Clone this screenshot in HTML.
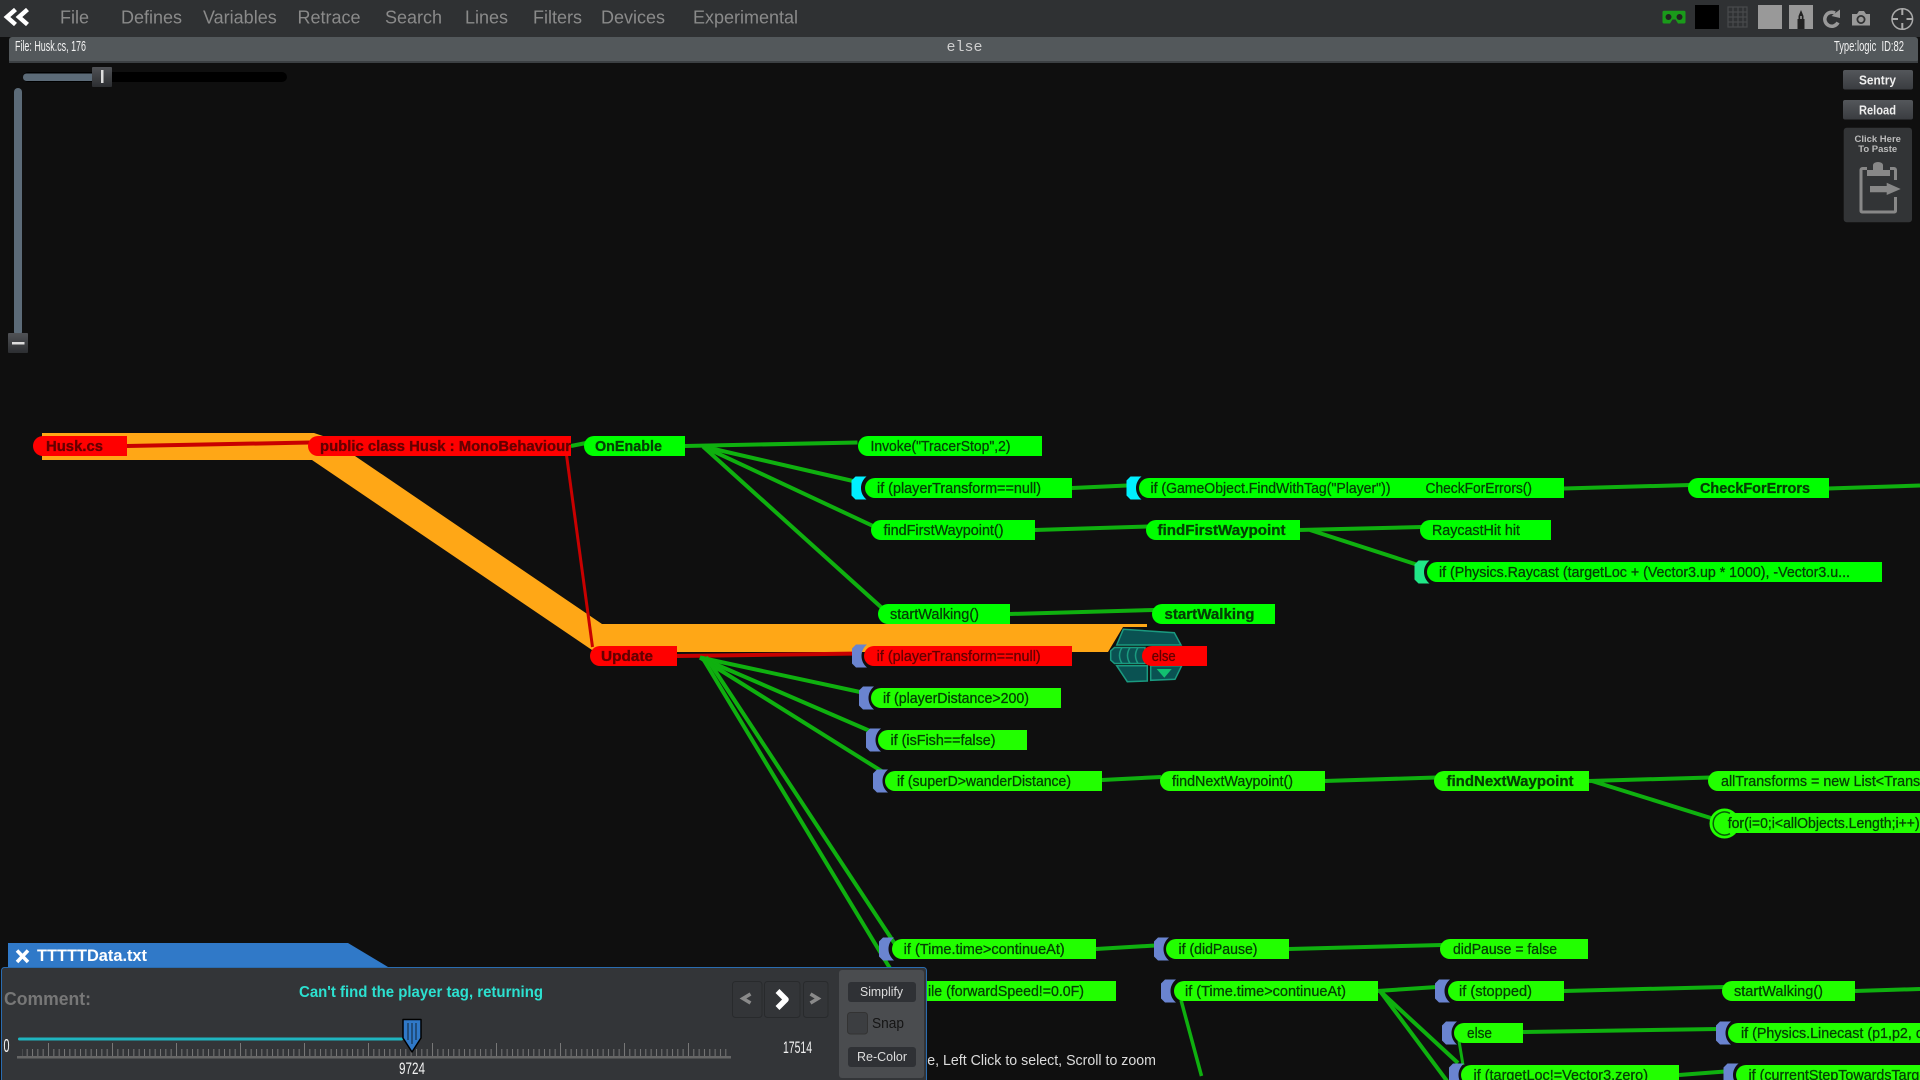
<!DOCTYPE html>
<html lang="en"><head><meta charset="utf-8"><title>Husk.cs</title>
<style>
html,body{margin:0;padding:0;background:#0f0f0f;width:1920px;height:1080px;overflow:hidden}
svg{display:block;font-family:"Liberation Sans",sans-serif}
.g text{fill:#043f04;stroke:#043f04;stroke-width:.3px;font-size:14.3px}
.r text{fill:#640000;stroke:#640000;stroke-width:.3px;font-size:14.3px}
.m text{fill:#8a8a8a;font-size:18px}
.c{fill:#f2f2f2;font-size:15px}
</style></head><body>
<svg width="1920" height="1080" viewBox="0 0 1920 1080" xmlns="http://www.w3.org/2000/svg">
<defs>
<path id="br" d="M4 0H15C11.500 3 9.500 7 9.500 11.500C9.500 16 11.500 20 15 23H4L0 19V4Z"/>
<linearGradient id="bt" x1="0" y1="0" x2="0" y2="1"><stop offset="0" stop-color="#54575b"/><stop offset="1" stop-color="#3a3c40"/></linearGradient>
<linearGradient id="kn" x1="0" y1="0" x2="0" y2="1"><stop offset="0" stop-color="#505256"/><stop offset="1" stop-color="#2c2e31"/></linearGradient>
<pattern id="tm" patternUnits="userSpaceOnUse" x="48" y="1049" width="5.333" height="7"><rect width="1" height="7" fill="#777"/></pattern>
</defs>
<rect width="1920" height="1080" fill="#0f0f0f"/>

<!-- orange path -->
<polygon fill="#ffa716" points="42,433 314,433 326,437 355,456 602,624 1147,624 1147,627 1123,627 1108,652 600,652 592,650 312,460 42,460"/>

<!-- red links -->
<g stroke="#c80000" fill="none">
<path stroke-width="4" d="M127 446L310 442.500"/>
<path stroke-width="3" d="M566.500 455L592.500 647"/>
<path stroke-width="4" d="M677 656L860 653.500"/>
</g>

<!-- green links -->
<g stroke="#0fb00f" stroke-width="4" fill="none">
<path d="M571 446L586 443"/>
<path d="M685 446L857.500 442.500"/>
<path d="M703 446.500L853 481"/>
<path d="M703 446.500L873 526"/>
<path d="M703 446.500L882 608"/>
<path d="M1072 488L1127 485.500"/>
<path d="M1035 530L1148 526.500"/>
<path d="M1010 614L1154 610"/>
<path d="M1564 488.500L1690 485"/>
<path d="M1828 488.500L1920 485.500"/>
<path d="M1299 530L1422 527"/>
<path d="M1310 530L1418 565"/>
<path d="M700 657.500L860 692"/>
<path d="M700 657.500L870 731"/>
<path d="M700 657.500L883 772"/>
<path d="M702 657L900 985"/>
<path d="M706 657L895 944"/>
<path d="M1096 949L1155 945.500"/>
<path d="M1289 949L1442 945"/>
<path d="M1377 991L1437 987"/>
<path d="M1564 991L1724 987"/>
<path d="M1855 991L1920 989"/>
<path d="M1523 1032L1718 1029"/>
<path d="M1380 991L1458 1063"/>
<path d="M1380 991L1447 1081"/>
<path d="M1459 1041L1463 1065" stroke-width="3"/>
<path d="M1679 1075L1725 1071.500"/>
<path d="M1181 1000L1201.500 1076" stroke-width="3.500"/>
<path d="M1102 780L1161 777"/>
<path d="M1324 781L1436 777.500"/>
<path d="M1589 781L1710 777.500"/>
<path d="M1592 781L1714 819"/>
</g>

<!-- teal widget -->
<g fill="#0a5252" stroke="#1a9a80" stroke-width="1.500">
<polygon points="1116.700,645 1123.300,629.300 1174.300,632.700 1181,645"/>
<polygon points="1114.500,647.500 1145,647.500 1145,663.500 1114.500,663.500 1110.700,660 1110.700,651"/>
<path fill="none" d="M1122 647.500Q1117 655.500 1122 663.500M1130 647.500Q1125 655.500 1130 663.500M1138 647.500Q1133 655.500 1138 663.500"/>
<polygon points="1116.700,665.700 1147.300,665.700 1147.300,681 1127.300,681.700"/>
<polygon points="1150.700,665.700 1181.700,665.700 1175,679.300 1150.700,680.300"/>
</g>
<polygon fill="#12c070" points="1156.700,669 1171.700,669 1164.300,677.700"/>

<!-- brackets -->
<g fill="#00f0ff"><use href="#br" x="851.500" y="476.500"/><use href="#br" x="1126.500" y="476.500"/></g>
<use href="#br" x="1414.500" y="560.500" fill="#20e888"/>
<g fill="#6a84d0">
<use href="#br" x="852" y="644.500"/><use href="#br" x="859" y="686.500"/><use href="#br" x="866" y="728.500"/><use href="#br" x="873" y="769.500"/>
<use href="#br" x="879" y="937.500"/><use href="#br" x="1154" y="937.500"/><use href="#br" x="1161" y="979.500"/><use href="#br" x="1435" y="979.500"/>
<use href="#br" x="1442" y="1021.500"/><use href="#br" x="1716" y="1021.500"/><use href="#br" x="1449" y="1063.500"/><use href="#br" x="1723.500" y="1063.500"/>
</g>

<!-- green nodes -->
<g fill="#00ff00">
<path d="M685 436H594a10 10 0 0 0 0 20H685z"/>
<path d="M1042 436H868a10 10 0 0 0 0 20H1042z"/>
<path d="M1072 478H875a10 10 0 0 0 0 20H1072z"/>
<path d="M1564 478H1149a10 10 0 0 0 0 20H1564z"/>
<path d="M1829 478H1698a10 10 0 0 0 0 20H1829z"/>
<path d="M1035 520H881a10 10 0 0 0 0 20H1035z"/>
<path d="M1300 520H1156a10 10 0 0 0 0 20H1300z"/>
<path d="M1551 520H1430a10 10 0 0 0 0 20H1551z"/>
<path d="M1882 562H1437a10 10 0 0 0 0 20H1882z"/>
<path d="M1010 604H888a10 10 0 0 0 0 20H1010z"/>
<path d="M1275 604H1162a10 10 0 0 0 0 20H1275z"/>
</g>
<g fill="#22ff00">
<path d="M1061 688H881a10 10 0 0 0 0 20H1061z"/>
<path d="M1027 730H888a10 10 0 0 0 0 20H1027z"/>
<path d="M1102 771H895a10 10 0 0 0 0 20H1102z"/>
<path d="M1325 771H1170a10 10 0 0 0 0 20H1325z"/>
<path d="M1589 771H1444a10 10 0 0 0 0 20H1589z"/>
<path d="M1920 771H1718a10 10 0 0 0 0 20H1920z"/>
<path d="M1920 813H1730a10 10 0 0 0 0 20H1920z"/>
<circle cx="1724.500" cy="823.500" r="15"/>
<path d="M1096 939H902a10 10 0 0 0 0 20H1096z"/>
<path d="M1116 981H880V1001H1116z"/>
<path d="M1289 939H1176a10 10 0 0 0 0 20H1289z"/>
<path d="M1588 939H1450a10 10 0 0 0 0 20H1588z"/>
<path d="M1378 981H1184a10 10 0 0 0 0 20H1378z"/>
<path d="M1564 981H1458a10 10 0 0 0 0 20H1564z"/>
<path d="M1855 981H1732a10 10 0 0 0 0 20H1855z"/>
<path d="M1523 1023H1464a10 10 0 0 0 0 20H1523z"/>
<path d="M1920 1023H1738a10 10 0 0 0 0 20H1920z"/>
<path d="M1679 1065H1471a10 10 0 0 0 0 20H1679z"/>
<path d="M1920 1065H1746a10 10 0 0 0 0 20H1920z"/>
</g>
<path d="M1730 813.300A11.500 11.500 0 1 0 1730 833.700" fill="none" stroke="#075c07" stroke-width="1.500"/>

<!-- red nodes -->
<g fill="#ff0000">
<path d="M127 436H43a10 10 0 0 0 0 20H127z"/>
<path d="M571 436H318a10 10 0 0 0 0 20H571z"/>
<path d="M677 646H600a10 10 0 0 0 0 20H677z"/>
<path d="M1072 646H874a10 10 0 0 0 0 20H1072z"/>
<path d="M1207 646H1152a10 10 0 0 0 0 20H1207z"/>
</g>

<!-- node text -->
<g class="g">
<text x="595" y="451" textLength="67" lengthAdjust="spacingAndGlyphs" style="font-weight:bold">OnEnable</text>
<text x="870.500" y="451" textLength="140" lengthAdjust="spacingAndGlyphs">Invoke("TracerStop",2)</text>
<text x="877" y="493" textLength="164" lengthAdjust="spacingAndGlyphs">if (playerTransform==null)</text>
<text x="1150.500" y="493" textLength="240" lengthAdjust="spacingAndGlyphs">if (GameObject.FindWithTag("Player"))</text>
<text x="1425.500" y="493" textLength="106.500" lengthAdjust="spacingAndGlyphs">CheckForErrors()</text>
<text x="1700" y="493" textLength="110" lengthAdjust="spacingAndGlyphs" style="font-weight:bold">CheckForErrors</text>
<text x="883.500" y="535" textLength="120" lengthAdjust="spacingAndGlyphs">findFirstWaypoint()</text>
<text x="1157.500" y="535" textLength="128" lengthAdjust="spacingAndGlyphs" style="font-weight:bold">findFirstWaypoint</text>
<text x="1432" y="535" textLength="88" lengthAdjust="spacingAndGlyphs">RaycastHit hit</text>
<text x="1439" y="577" textLength="411" lengthAdjust="spacingAndGlyphs">if (Physics.Raycast (targetLoc + (Vector3.up * 1000), -Vector3.u...</text>
<text x="890" y="619" textLength="89" lengthAdjust="spacingAndGlyphs">startWalking()</text>
<text x="1164.500" y="619" textLength="90" lengthAdjust="spacingAndGlyphs" style="font-weight:bold">startWalking</text>
<text x="883" y="703" textLength="146" lengthAdjust="spacingAndGlyphs">if (playerDistance&gt;200)</text>
<text x="890.500" y="745" textLength="105" lengthAdjust="spacingAndGlyphs">if (isFish==false)</text>
<text x="897" y="786" textLength="174" lengthAdjust="spacingAndGlyphs">if (superD&gt;wanderDistance)</text>
<text x="1172" y="786" textLength="121" lengthAdjust="spacingAndGlyphs">findNextWaypoint()</text>
<text x="1446.500" y="786" textLength="127" lengthAdjust="spacingAndGlyphs" style="font-weight:bold">findNextWaypoint</text>
<text x="1721" y="786">allTransforms = new List&lt;Transform&gt;()</text>
<text x="1727.700" y="828" textLength="192" lengthAdjust="spacingAndGlyphs">for(i=0;i&lt;allObjects.Length;i++)</text>
<text x="903.700" y="954" textLength="161" lengthAdjust="spacingAndGlyphs">if (Time.time&gt;continueAt)</text>
<text x="928" y="996" textLength="156" lengthAdjust="spacingAndGlyphs">ile (forwardSpeed!=0.0F)</text>
<text x="1178.500" y="954" textLength="79" lengthAdjust="spacingAndGlyphs">if (didPause)</text>
<text x="1453" y="954" textLength="104" lengthAdjust="spacingAndGlyphs">didPause = false</text>
<text x="1185" y="996" textLength="161" lengthAdjust="spacingAndGlyphs">if (Time.time&gt;continueAt)</text>
<text x="1459" y="996" textLength="73" lengthAdjust="spacingAndGlyphs">if (stopped)</text>
<text x="1734" y="996" textLength="89" lengthAdjust="spacingAndGlyphs">startWalking()</text>
<text x="1467" y="1038" textLength="25" lengthAdjust="spacingAndGlyphs">else</text>
<text x="1741" y="1038">if (Physics.Linecast (p1,p2, collisionMask))</text>
<text x="1473.500" y="1080" textLength="174.500" lengthAdjust="spacingAndGlyphs">if (targetLoc!=Vector3.zero)</text>
<text x="1748.500" y="1080">if (currentStepTowardsTarget)</text>
</g>
<g class="r">
<text x="46" y="451" textLength="57" lengthAdjust="spacingAndGlyphs" style="font-weight:bold">Husk.cs</text>
<text x="320" y="451" textLength="251" lengthAdjust="spacingAndGlyphs" style="font-weight:bold">public class Husk : MonoBehaviour</text>
<text x="601" y="661" textLength="52" lengthAdjust="spacingAndGlyphs" style="font-weight:bold">Update</text>
<text x="876.700" y="661" textLength="164" lengthAdjust="spacingAndGlyphs">if (playerTransform==null)</text>
<text x="1151.700" y="661" textLength="24" lengthAdjust="spacingAndGlyphs">else</text>
</g>
<text x="922.500" y="1065" fill="#dcdcdc" font-size="14.300" textLength="233.500" lengthAdjust="spacingAndGlyphs">re, Left Click to select, Scroll to zoom</text>

<!-- top bar -->
<rect x="9" y="37" width="1909" height="26" rx="3" fill="#53585b"/>
<rect x="9" y="61" width="1909" height="2" fill="#3c4043"/>
<rect width="1920" height="37" fill="#2f3133"/>
<path d="M15.500 9.500L7 17l8.500 7.500M27.500 9.500L19 17l8.500 7.500" fill="none" stroke="#fff" stroke-width="4.500"/>
<g class="m">
<text x="60" y="23.500">File</text><text x="121" y="23.500">Defines</text><text x="203" y="23.500">Variables</text><text x="297.500" y="23.500">Retrace</text><text x="385" y="23.500">Search</text><text x="465" y="23.500">Lines</text><text x="533" y="23.500">Filters</text><text x="601" y="23.500">Devices</text><text x="693" y="23.500">Experimental</text>
</g>
<text class="c" x="15" y="51" textLength="71" lengthAdjust="spacingAndGlyphs">File: Husk.cs, 176</text>
<text x="946.500" y="51" textLength="36" font-size="15" fill="#cfcfcf" style="font-family:'Liberation Mono',monospace">else</text>
<text class="c" x="1834" y="51" textLength="70" lengthAdjust="spacingAndGlyphs">Type:logic&#160;&#160;ID:82</text>

<!-- top right icons -->
<path fill="#1a9a1a" d="M1664 10.700H1684a1.500 1.500 0 0 1 1.500 1.500V22a1.500 1.500 0 0 1-1.500 1.500H1678L1675.500 19.500H1672.500L1670 23.500H1664a1.500 1.500 0 0 1-1.500-1.500V12.200a1.500 1.500 0 0 1 1.500-1.500z"/>
<circle cx="1668.500" cy="17" r="3" fill="#222"/><circle cx="1679.500" cy="17" r="3" fill="#222"/>
<rect x="1695" y="5" width="24" height="24" fill="#000"/>
<path fill="none" stroke="#484a4c" stroke-width="1.200" d="M1728 7H1747V27H1728ZM1728 12H1747M1728 17H1747M1728 22H1747M1733 7V27M1738 7V27M1743 7V27"/>
<rect x="1758" y="5" width="24" height="24" fill="#999"/>
<rect x="1789" y="5" width="24" height="24" fill="#999"/>
<path fill="#222" d="M1801 10L1803.500 16V19H1804.500V29H1797.500V19H1798.500V16Z"/>
<path fill="#999" d="M1800.200 16h1.600v3h-1.600z"/>
<path fill="none" stroke="#999" stroke-width="3.500" d="M1838 22.500A7 7 0 1 1 1835 13"/>
<polygon fill="#999" points="1840,9.500 1840,18 1831.500,16"/>
<path fill="#999" d="M1853 14H1857L1859 11H1864L1866 14H1870V25.500H1852V14z"/>
<circle cx="1861" cy="19.500" r="4" fill="#333" stroke="#2f3133"/><circle cx="1861" cy="19.500" r="2.700" fill="#999"/>
<circle cx="1902.300" cy="19" r="10.300" fill="none" stroke="#aaa" stroke-width="1.500"/>
<path stroke="#aaa" stroke-width="2" d="M1902.300 9V15M1902.300 23V29M1892 19H1898M1906.500 19H1912.500"/>

<!-- zoom sliders -->
<rect x="23" y="72" width="264" height="10" rx="5" fill="#000"/>
<rect x="23" y="73.500" width="72" height="7.500" rx="3.500" fill="#5c6b78"/>
<rect x="92" y="67" width="20" height="20" rx="1" fill="url(#kn)"/>
<rect x="101" y="70" width="2.500" height="13" fill="#ddd"/>
<rect x="14" y="88" width="8" height="248" rx="4" fill="#5c6b78"/>
<rect x="8" y="333" width="20" height="20" rx="1" fill="url(#kn)"/>
<rect x="12" y="342" width="12.500" height="2.500" fill="#ddd"/>

<!-- right buttons -->
<rect x="1843" y="70" width="70" height="19.500" rx="2" fill="url(#bt)"/>
<text x="1859" y="84.500" fill="#eee" font-size="12.500" font-weight="bold" textLength="37" lengthAdjust="spacingAndGlyphs">Sentry</text>
<rect x="1843" y="100" width="70" height="19.500" rx="2" fill="url(#bt)"/>
<text x="1859" y="114.500" fill="#eee" font-size="12.500" font-weight="bold" textLength="37" lengthAdjust="spacingAndGlyphs">Reload</text>
<rect x="1843.700" y="127.700" width="68.300" height="94.500" rx="3" fill="#323436"/>
<text x="1877.700" y="142" text-anchor="middle" fill="#bbb" font-size="9.500" font-weight="bold">Click Here</text>
<text x="1877.700" y="152" text-anchor="middle" fill="#bbb" font-size="9.500" font-weight="bold">To Paste</text>
<path fill="none" stroke="#888" stroke-width="3" d="M1867 168.500H1862.500a1.500 1.500 0 0 0-1.500 1.500V211a1 1 0 0 0 1 1H1894.500a1 1 0 0 0 1-1V197M1895.500 180V170a1.500 1.500 0 0 0-1.500-1.500H1890"/>
<path fill="#888" d="M1867 170H1873V165a5 3 0 0 1 10 0V170H1890V176H1867Z"/>
<path fill="#888" d="M1870 186H1886.700V182.700L1900.700 189L1886.700 195V192.300H1870Z"/>

<!-- bottom panel -->
<polygon fill="#3079c8" points="8,943 348,943 388,967 8,967"/>
<rect x="1.500" y="967.500" width="925" height="120" rx="3" fill="#333538" stroke="#2a6cb0"/>
<path stroke="#fff" stroke-width="3.500" d="M17 950.500L28 962M28 950.500L17 962"/>
<text x="37" y="961" fill="#fff" font-size="16.500" font-weight="bold" textLength="110" lengthAdjust="spacingAndGlyphs">TTTTTData.txt</text>
<text x="4" y="1005" fill="#777" font-size="18" font-weight="bold" textLength="87" lengthAdjust="spacingAndGlyphs">Comment:</text>
<text x="299" y="997" fill="#2ce0d0" font-size="16" font-weight="bold" textLength="244" lengthAdjust="spacingAndGlyphs">Can't find the player tag, returning</text>
<rect x="18" y="1037.500" width="385" height="3" rx="1.500" fill="#1fb5c0"/>
<rect x="22" y="1049" width="705" height="7" fill="url(#tm)"/>
<g fill="#777"><rect x="48" y="1043" width="1" height="13"/><rect x="112" y="1043" width="1" height="13"/><rect x="176" y="1043" width="1" height="13"/><rect x="240" y="1043" width="1" height="13"/><rect x="304" y="1043" width="1" height="13"/><rect x="368" y="1043" width="1" height="13"/><rect x="432" y="1043" width="1" height="13"/><rect x="496" y="1043" width="1" height="13"/><rect x="560" y="1043" width="1" height="13"/><rect x="624" y="1043" width="1" height="13"/><rect x="688" y="1043" width="1" height="13"/></g>
<rect x="17" y="1056" width="714" height="2.500" fill="#666"/>
<path d="M403 1019.500H421V1038L412 1052L403 1038Z" fill="#3079c8" stroke="#000" stroke-width="1.500" stroke-linejoin="round"/>
<path d="M408 1023V1040M412 1023V1044M416 1023V1040" stroke="#123" stroke-width="1"/>
<text x="3.500" y="1052" fill="#f2f2f2" font-size="18" textLength="6" lengthAdjust="spacingAndGlyphs">0</text>
<text x="399" y="1074" fill="#f2f2f2" font-size="17" textLength="26" lengthAdjust="spacingAndGlyphs">9724</text>
<text x="783" y="1053" fill="#f2f2f2" font-size="17" textLength="29" lengthAdjust="spacingAndGlyphs">17514</text>

<g fill="#333538" stroke="#282a2c">
<rect x="732.500" y="981.500" width="29.500" height="36" rx="3"/>
<rect x="764.500" y="981.500" width="35.500" height="36" rx="3"/>
<rect x="803.500" y="981.500" width="24.500" height="36" rx="3"/>
</g>
<path fill="none" stroke="#8a8a8a" stroke-width="3.500" d="M750.500 994L743 998.500L750.500 1003M810.500 994L818 998.500L810.500 1003"/>
<path fill="none" stroke="#fff" stroke-width="5.500" stroke-linejoin="round" d="M777.500 991L786 999.500L777.500 1008"/>
<rect x="839" y="970" width="85" height="108" rx="3" fill="#4a4c4f"/>
<rect x="848" y="982" width="68" height="20" rx="3" fill="#2f3135"/>
<text x="860" y="996" fill="#ddd" font-size="13" textLength="43" lengthAdjust="spacingAndGlyphs">Simplify</text>
<rect x="847.500" y="1012.500" width="20" height="21.500" rx="3" fill="#3c3e41" stroke="#333"/>
<text x="872" y="1028" fill="#151515" font-size="14.500" textLength="32" lengthAdjust="spacingAndGlyphs">Snap</text>
<rect x="848" y="1047" width="68" height="20" rx="3" fill="#2f3135"/>
<text x="857" y="1061" fill="#ddd" font-size="13" textLength="50" lengthAdjust="spacingAndGlyphs">Re-Color</text>
</svg>
</body></html>
